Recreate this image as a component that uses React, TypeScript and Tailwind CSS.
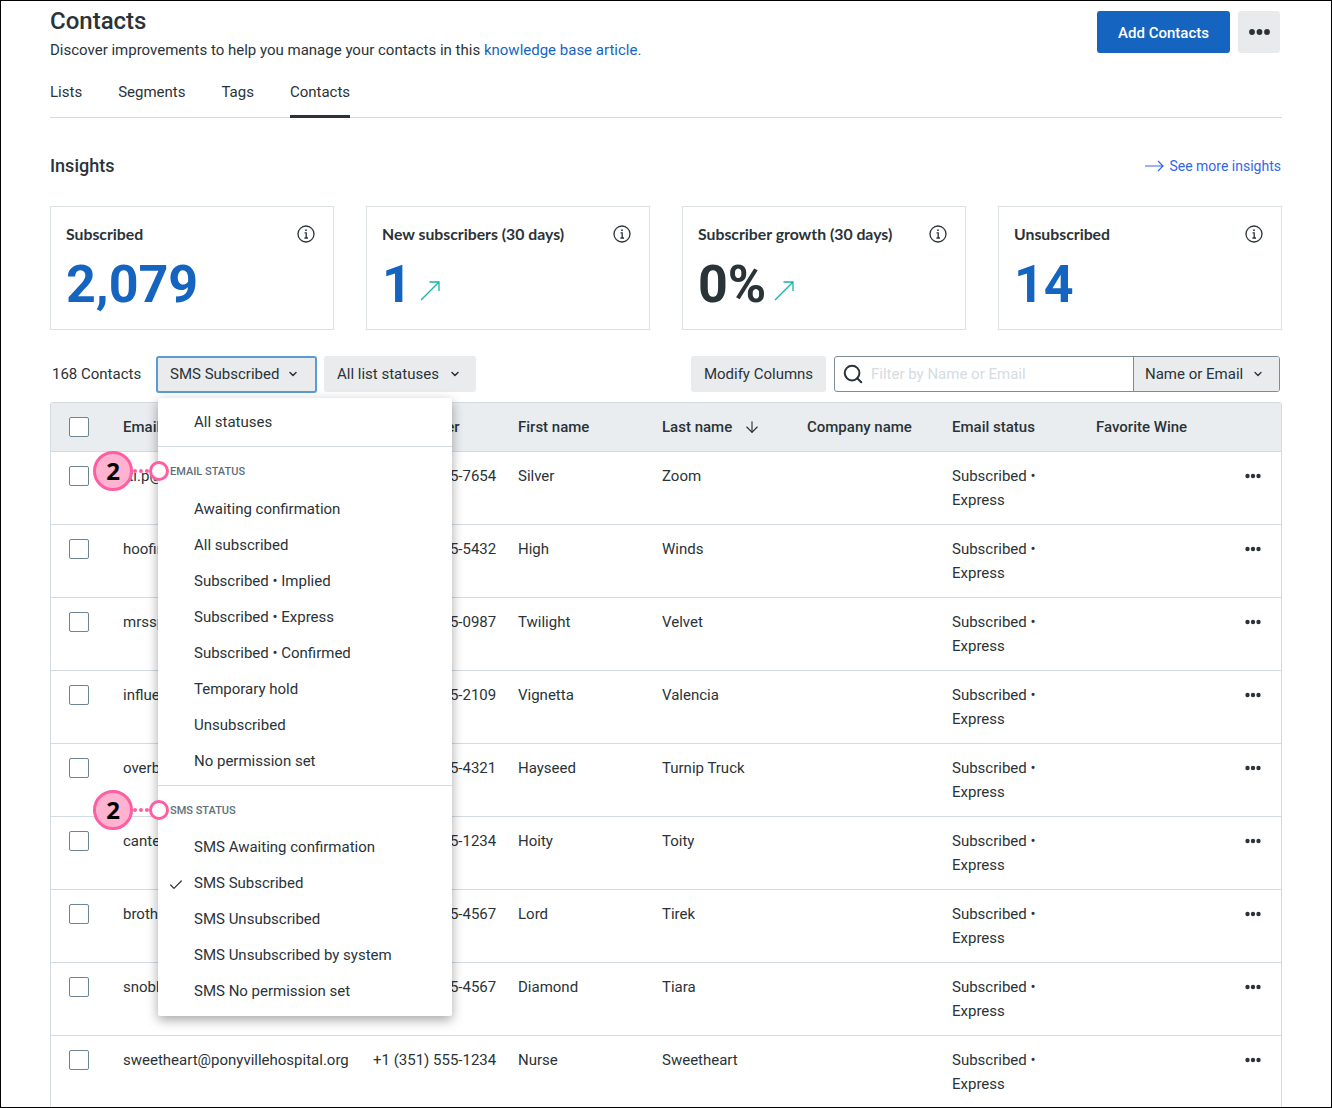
import React from 'react';
import { ArrowDown, Check, ChevronDown, Search } from 'lucide-react';

const rows = [
  { email: 'rti.p@ponyvillehospital.org', phone: '+1 (351) 555-7654', first: 'Silver', last: 'Zoom' },
  { email: 'hoofington@ponyvillehospital.org', phone: '+1 (351) 555-5432', first: 'High', last: 'Winds' },
  { email: 'mrssparkle@ponyvillehospital.org', phone: '+1 (351) 555-0987', first: 'Twilight', last: 'Velvet' },
  { email: 'influencer@ponyvillehospital.org', phone: '+1 (351) 555-2109', first: 'Vignetta', last: 'Valencia' },
  { email: 'overbrook@ponyvillehospital.org', phone: '+1 (351) 555-4321', first: 'Hayseed', last: 'Turnip Truck' },
  { email: 'canterlot@ponyvillehospital.org', phone: '+1 (351) 555-1234', first: 'Hoity', last: 'Toity' },
  { email: 'brotherhooves@ponyvillehospital.org', phone: '+1 (351) 555-4567', first: 'Lord', last: 'Tirek' },
  { email: 'snobbish@ponyvillehospital.org', phone: '+1 (351) 555-4567', first: 'Diamond', last: 'Tiara' },
  { email: 'sweetheart@ponyvillehospital.org', phone: '+1 (351) 555-1234', first: 'Nurse', last: 'Sweetheart' },
];

const emailStatuses = [
  'Awaiting confirmation',
  'All subscribed',
  'Subscribed • Implied',
  'Subscribed • Express',
  'Subscribed • Confirmed',
  'Temporary hold',
  'Unsubscribed',
  'No permission set',
];

const smsStatuses = [
  'SMS Awaiting confirmation',
  'SMS Subscribed',
  'SMS Unsubscribed',
  'SMS Unsubscribed by system',
  'SMS No permission set',
];

const cols = 'grid grid-cols-[72px_250px_145px_144px_145px_145px_144px_1fr]';

const InfoIcon = () => (
  <svg width="18" height="18" viewBox="0 0 18 18" fill="none" stroke="#2a3338" strokeWidth="1.3">
    <circle cx="9" cy="9" r="8" />
    <path d="M7.6 7.8H9.2V13M7.4 13H11" />
    <circle cx="9" cy="5.2" r="0.9" fill="#2a3338" stroke="none" />
  </svg>
);

const TrendArrow = () => (
  <svg width="20" height="20" viewBox="0 0 20 20" fill="none" stroke="#17b3a8" strokeWidth="1.3">
    <path d="M1 19L19 1M9.5 1H19V10" />
  </svg>
);

const Dots = ({ big }: { big?: boolean }) =>
  big ? (
    <svg width="21" height="8" viewBox="0 0 21 8" fill="#2a3338">
      <circle cx="3" cy="4" r="2.9" />
      <circle cx="10.5" cy="4" r="2.9" />
      <circle cx="18" cy="4" r="2.9" />
    </svg>
  ) : (
    <svg width="16" height="6" viewBox="0 0 16 6" fill="#2a3338">
      <circle cx="2.5" cy="3" r="2.2" />
      <circle cx="8" cy="3" r="2.2" />
      <circle cx="13.5" cy="3" r="2.2" />
    </svg>
  );

const Checkbox = () => <div className="w-5 h-5 rounded-[2px] border border-[#6d8592] bg-white" />;

const InsightCard = ({ title, value, dark, trend }: { title: string; value: string; dark?: boolean; trend?: boolean }) => (
  <div className="h-[124px] border border-[#dce1e4] px-[15px] pt-[15px]">
    <div className="flex items-center justify-between pr-[3px] h-[24px]">
      <span className="text-[15.8px] font-bold font-['Lato',sans-serif]">{title}</span>
      <InfoIcon />
    </div>
    <div className="flex items-end mt-[9px]">
      <span className={`text-[52px] leading-[60px] font-bold ${dark ? 'text-[#2a3338]' : 'text-[#1565c0]'}`}>{value}</span>
      {trend && (
        <span className="ml-[8px] mb-[14px]">
          <TrendArrow />
        </span>
      )}
    </div>
  </div>
);

const Annotation = ({ top }: { top: string }) => (
  <div className={`absolute left-[-65px] flex items-center ${top}`}>
    <div className="w-[40px] h-[40px] rounded-full bg-[#ffb3d0] border-[3px] border-[#ff5fa2] flex items-center justify-center text-[24px] font-bold text-black font-['Open_Sans',sans-serif]">
      2
    </div>
    <div className="w-[16px] border-t-[4px] border-dotted border-[#ff5fa2]" />
    <div className="w-[20px] h-[20px] rounded-full bg-white border-[3px] border-[#ff5fa2]" />
  </div>
);

const StatusItem = ({ label, checked }: { label: string; checked?: boolean }) => (
  <div className="relative h-[36px] pl-[36px] flex items-center text-[15px]">
    {checked && <Check size={16} strokeWidth={1.8} className="absolute left-[10px] top-[11px]" />}
    {label}
  </div>
);

const StatusDropdown = () => (
  <div className="absolute left-[2px] top-[42px] w-[294px] h-[618px] z-10 bg-white rounded-[2px] shadow-[0_4px_12px_rgba(0,0,0,0.35)]">
    <div className="h-[49px] pt-[2px] pl-[36px] flex items-center text-[15px] border-b border-[#d3dbe0]">All statuses</div>
    <div className="pl-[12px] h-[45px] pt-[18px] text-[11px] leading-[14px] font-medium text-[#5d707c]">EMAIL STATUS</div>
    <div>
      {emailStatuses.map(s => (
        <StatusItem key={s} label={s} />
      ))}
    </div>
    <div className="border-b border-[#d3dbe0] mt-[5px]" />
    <div className="pl-[12px] h-[44px] pt-[18px] text-[11px] leading-[14px] font-medium text-[#5d707c]">SMS STATUS</div>
    <div>
      {smsStatuses.map(s => (
        <StatusItem key={s} label={s} checked={s === 'SMS Subscribed'} />
      ))}
    </div>
    <Annotation top="top-[53px]" />
    <Annotation top="top-[392px]" />
  </div>
);

const App: React.FC = () => {
  return (
    <div className="w-[1332px] h-[1108px] overflow-hidden bg-white border-t border-l border-r border-b border-black pl-[49px] pr-[49px] text-[#2a3338] font-['Roboto',sans-serif]">
      {/* Header */}
      <div className="flex justify-between h-[64px]">
        <div>
          <h1 className="text-[24px] leading-[30px] font-medium mt-[5px]">Contacts</h1>
          <p className="text-[15px] leading-[24px] mt-[2px]">
            Discover improvements to help you manage your contacts in this{' '}
            <span className="text-[#1565c0]">knowledge base article.</span>
          </p>
        </div>
        <div className="flex gap-2 mt-[10px] mr-[2px]">
          <button className="w-[133px] h-[42px] pt-[2px] rounded-[3px] bg-[#1565c0] text-white text-[15px] font-medium">Add Contacts</button>
          <button className="w-[42px] h-[42px] rounded-[3px] bg-[#e8eaec] flex items-center justify-center">
            <Dots big />
          </button>
        </div>
      </div>

      {/* Tabs */}
      <div className="flex gap-9 h-[53px] border-b border-[#d3dbe0]">
        {['Lists', 'Segments', 'Tags', 'Contacts'].map(tab => (
          <div
            key={tab}
            className={`h-[53px] pt-[15px] text-[15px] leading-[24px] ${tab === 'Contacts' ? 'border-b-[3px] border-[#2a3338]' : ''}`}
          >
            {tab}
          </div>
        ))}
      </div>

      {/* Insights */}
      <div className="flex items-center justify-between mt-[33px] h-[28px]">
        <h2 className="text-[18px] font-medium">Insights</h2>
        <div className="flex items-center gap-[5px] mr-[1px] mt-[2px] text-[14px] text-[#3366e8]">
          <svg width="19" height="12" viewBox="0 0 19 12" fill="none" stroke="#3366e8" strokeWidth="1.2">
            <path d="M0 6H18M13 1L18 6L13 11" />
          </svg>
          See more insights
        </div>
      </div>
      <div className="grid grid-cols-4 gap-8 mt-[27px]">
        <InsightCard title="Subscribed" value="2,079" />
        <InsightCard title="New subscribers (30 days)" value="1" trend />
        <InsightCard title="Subscriber growth (30 days)" value="0%" dark trend />
        <InsightCard title="Unsubscribed" value="14" />
      </div>

      {/* Toolbar */}
      <div className="flex items-center mt-[26px] h-[36px] text-[15px]">
        <span className="w-[106px] pl-[2px] pt-[1px]">168 Contacts</span>
        <div className="relative">
          <button className="w-[161px] h-[37px] rounded-[3px] bg-[#e9ebed] border-2 border-[#5c9bd1] flex items-center pl-[12px]">
            SMS Subscribed
            <ChevronDown size={12} strokeWidth={3} className="ml-[8px]" />
          </button>
          <StatusDropdown />
        </div>
        <button className="w-[152px] h-[36px] ml-[7px] rounded-[3px] bg-[#e9ebed] flex items-center pl-[13px]">
          All list statuses
          <ChevronDown size={12} strokeWidth={3} className="ml-[10px]" />
        </button>
        <button className="w-[135px] h-[36px] ml-[215px] rounded-[3px] bg-[#e9ebed]">Modify Columns</button>
        <div className="flex w-[446px] h-[36px] ml-[8px] rounded-[3px] border border-[#7c8b94] overflow-hidden">
          <div className="w-[298px] flex items-center pl-[7px] gap-[7px] text-[#d5dce1]">
            <Search size={22} strokeWidth={2.2} className="text-[#2a3338]" />
            Filter by Name or Email
          </div>
          <div className="flex-1 flex items-center pl-[11px] bg-[#e9ebed] border-l border-[#7c8b94]">
            Name or Email
            <ChevronDown size={12} strokeWidth={2.6} className="ml-[9px]" />
          </div>
        </div>
      </div>

      {/* Table */}
      <div className="mt-[10px] border border-b-0 border-[#d3dbe0] rounded-t-[3px] text-[15px]">
        <div className={`${cols} h-[49px] items-center bg-[#e9edf0] border-b border-[#d3dbe0] font-medium`}>
          <div className="pl-[18px]">
            <Checkbox />
          </div>
          <div>Email</div>
          <div>SMS number</div>
          <div>First name</div>
          <div className="flex items-center gap-[11px]">
            Last name
            <ArrowDown size={18} strokeWidth={1.5} />
          </div>
          <div>Company name</div>
          <div>Email status</div>
          <div>Favorite Wine</div>
        </div>
        {rows.map(row => (
          <div key={row.email} className={`${cols} h-[73px] border-b border-[#d3dbe0] leading-[24px]`}>
            <div className="pl-[18px] pt-[14px]">
              <Checkbox />
            </div>
            <div className="pt-[12px]">{row.email}</div>
            <div className="pt-[12px]">{row.phone}</div>
            <div className="pt-[12px]">{row.first}</div>
            <div className="pt-[12px]">{row.last}</div>
            <div />
            <div className="pt-[12px]">
              Subscribed •
              <br />
              Express
            </div>
            <div className="flex justify-end pr-[20px] pt-[21px]">
              <span>
                <Dots />
              </span>
            </div>
          </div>
        ))}
      </div>
    </div>
  );
};

export default App;
